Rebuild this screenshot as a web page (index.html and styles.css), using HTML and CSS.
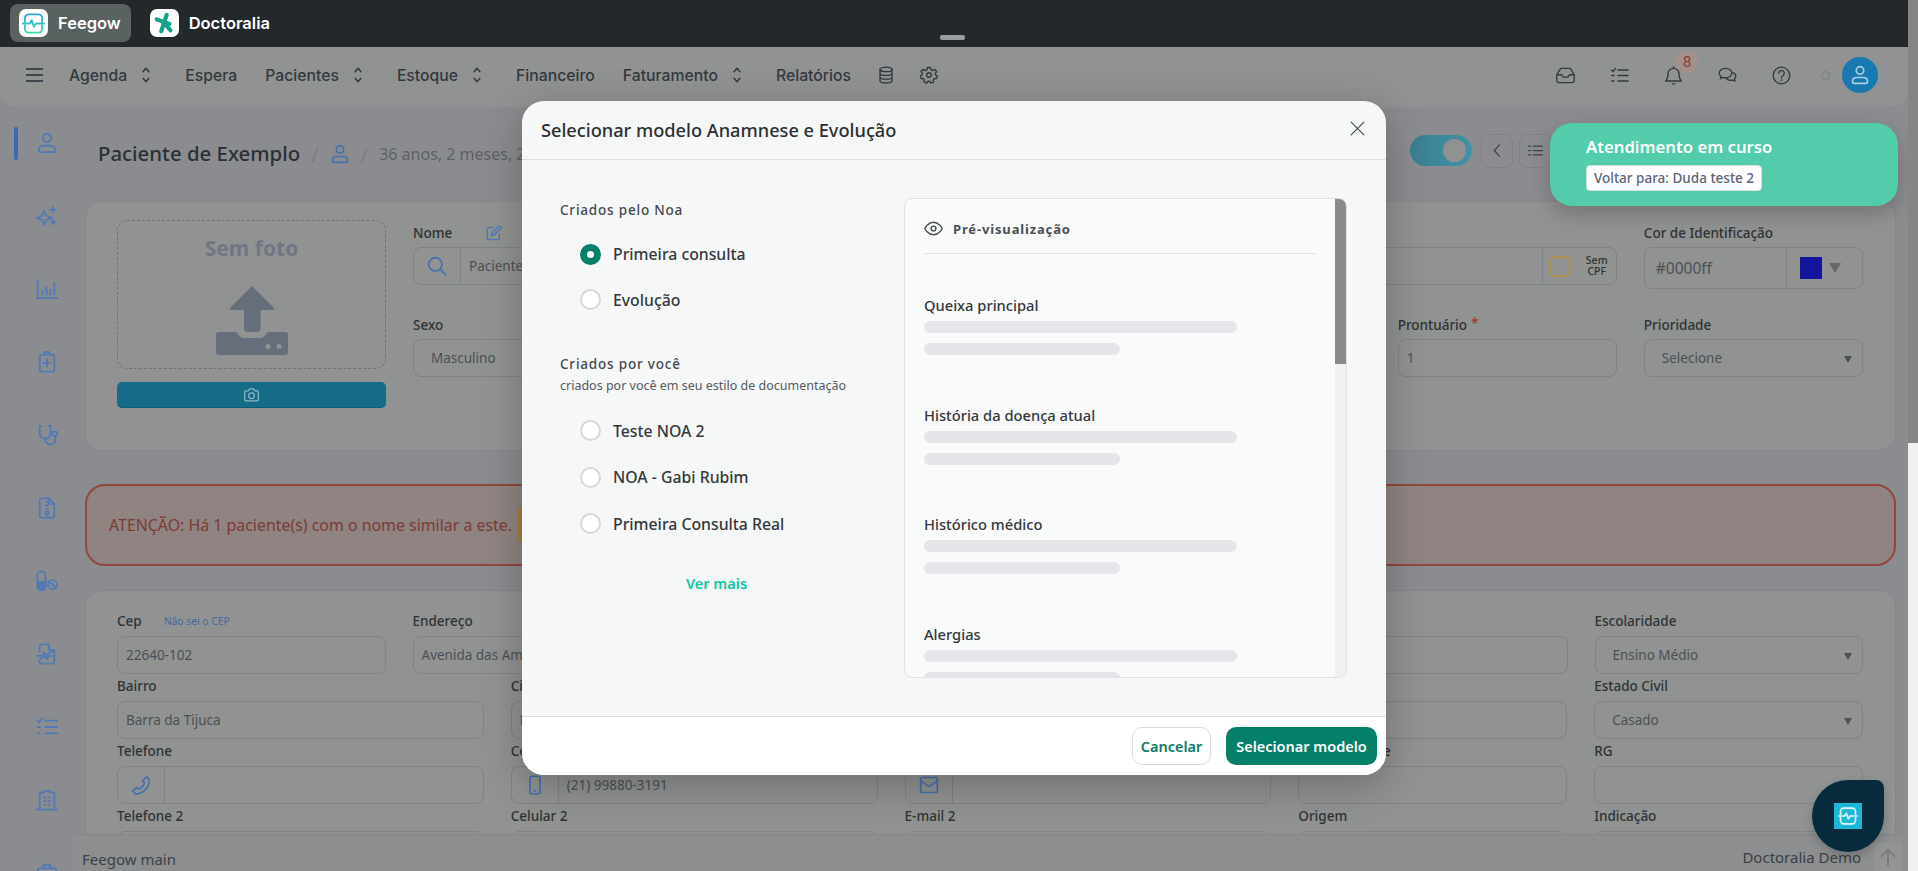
FILE: index.html
```html
<!DOCTYPE html>
<html lang="pt-BR">
<head>
  <meta charset="UTF-8" />
  <title>Feegow</title>
  <link rel="stylesheet" href="styles.css">
</head>
<body>
  <!-- Shared icons -->
  <svg class="icon-defs" aria-hidden="true">
    <defs>
      <linearGradient id="feegow-grad" x1="0" y1="0" x2="0" y2="1">
        <stop offset="0" stop-color="#2fa8e0"/>
        <stop offset="1" stop-color="#3fdca8"/>
      </linearGradient>
    </defs>
    <symbol id="i-updown" viewBox="0 0 12 24"><path d="M2.500 8L6 4l3.500 4M2.500 16L6 20l3.500-4"/></symbol>
    <symbol id="i-user" viewBox="0 0 24 24"><circle cx="12" cy="6.500" r="4.500"/><path d="M3 20c0-3 2.200-5 5-5h8c2.800 0 5 2 5 5 0 1.300-.8 2-2 2H5c-1.200 0-2-.7-2-2z"/></symbol>
    <symbol id="i-sparkle" viewBox="0 0 24 24"><path d="M9 6l2.300 5.700L17 14l-5.700 2.300L9 22l-2.300-5.700L1 14l5.700-2.300z"/><path class="fill" d="M18.500 0l1.300 3.700 3.700 1.300-3.700 1.300L18.500 10l-1.300-3.700L13.500 5l3.700-1.300zM18.500 14l1.300 3.200 3.200 1.300-3.200 1.300-1.300 3.200-1.300-3.200-3.200-1.300 3.200-1.300z"/></symbol>
    <symbol id="i-chart" viewBox="0 0 24 24"><path d="M2 2v20h21M7 14v4M11.500 10v8M15.500 13v5M20 6v12"/></symbol>
    <symbol id="i-clipboard" viewBox="0 0 24 24"><rect x="4" y="4" width="16" height="18.500" rx="2"/><path d="M9 4V3a2 2 0 0 1 2-2h2a2 2 0 0 1 2 2v1M12 9v8M8 13h8"/></symbol>
    <symbol id="i-stetho" viewBox="0 0 24 24"><path d="M6 2H4v8a6 6 0 0 0 12 0V2h-2M10 16v1a6 6 0 0 0 11 2.500V14"/><circle cx="20.500" cy="10.500" r="2.500"/></symbol>
    <symbol id="i-zipfile" viewBox="0 0 24 24"><path d="M14 1.500H6a2 2 0 0 0-2 2v17a2 2 0 0 0 2 2h12a2 2 0 0 0 2-2V7.500zM14 1.500v6h6M11 5h2M11 9h2M11 13h2"/><circle cx="12" cy="17.500" r="1.800"/></symbol>
    <symbol id="i-pills" viewBox="0 0 24 24"><rect x="1.500" y="1.500" width="9" height="21" rx="4.500"/><path class="fill" d="M1.500 12h9v6a4.500 4.500 0 0 1-9 0z"/><circle cx="18" cy="16" r="5"/><path d="M14.500 12.500l7 7"/></symbol>
    <symbol id="i-filepulse" viewBox="0 0 24 24"><path d="M14 1.500H6a2 2 0 0 0-2 2v6M4 18v2.500a2 2 0 0 0 2 2h12a2 2 0 0 0 2-2V7.500zM14 1.500v6h6M1 14h6l2-3.500 3 7 2-3.500h4"/></symbol>
    <symbol id="i-listcheck" viewBox="0 0 24 24"><path d="M10 5h13M10 12h13M10 19h13M1.500 5l2 2L7 2.500M2 12h2M2 19h2"/></symbol>
    <symbol id="i-building" viewBox="0 0 24 24"><path d="M4 22.500V5a1 1 0 0 1 1-1h4V2h6v2h4a1 1 0 0 1 1 1v17.500zM1 22.500h22M9 9h1.500M13.500 9H15M9 13h1.500M13.500 13H15M9 17h1.500M13.500 17H15"/></symbol>
    <symbol id="i-briefcase" viewBox="0 0 24 24"><rect x="2" y="7" width="20" height="15" rx="2"/><path d="M8 7V4a1 1 0 0 1 1-1h6a1 1 0 0 1 1 1v3"/></symbol>
    <symbol id="i-db" viewBox="0 0 24 24"><ellipse cx="12" cy="4.500" rx="8" ry="3"/><path d="M4 4.500v15c0 1.700 3.600 3 8 3s8-1.300 8-3v-15M4 9.500c0 1.700 3.600 3 8 3s8-1.300 8-3M4 14.500c0 1.700 3.600 3 8 3s8-1.300 8-3"/></symbol>
    <symbol id="i-gear" viewBox="0 0 24 24"><circle cx="12" cy="12" r="3"/><path d="M10 2h4l.6 3 2.500 1.100 2.600-1.600 2.500 2.900-1.900 2.400.5 2.200 2.200 1-1 3.800-2.700-.1-1.600 1.900.4 2.900-3.600 1.300-1.500-2.500h-2.500l-1.500 2.500-3.600-1.300.4-2.900-1.600-1.900-2.700.1-1-3.800 2.200-1 .5-2.200-1.900-2.400 2.500-2.900 2.600 1.600L9.400 5z"/></symbol>
    <symbol id="i-inbox" viewBox="0 0 24 24"><path d="M6 3h12l5 8v7a3 3 0 0 1-3 3H4a3 3 0 0 1-3-3v-7zM1 11h6l2 3h6l2-3h6"/></symbol>
    <symbol id="i-tasks" viewBox="0 0 24 24"><path d="M10 5h13M10 12h13M10 19h13M2 5l2 2 3-4M2 12h3M2 19h3"/></symbol>
    <symbol id="i-bell" viewBox="0 0 24 24"><path d="M12 3a7 7 0 0 0-7 7c0 5-1 7-3 9h20c-2-2-3-4-3-9a7 7 0 0 0-7-7zM12 1v2M10.500 22.500h3"/></symbol>
    <symbol id="i-chat" viewBox="0 0 24 24"><path d="M9.500 3C5 3 1.500 5.700 1.500 9c0 1.600.8 3 2.200 4.100L3 16l3.500-1.500c1 .3 2 .5 3 .5 4.500 0 8-2.700 8-6s-3.500-6-8-6z"/><path d="M19 8.500c2.200 1 3.500 2.700 3.500 4.500 0 1.300-.6 2.400-1.700 3.300l.7 2.700-3.200-1.300c-3.300.8-6.600-.3-8-2.500"/></symbol>
    <symbol id="i-help" viewBox="0 0 24 24"><circle cx="12" cy="12" r="10.500"/><path d="M8.500 9a3.500 3.500 0 1 1 5.500 3c-1.300.9-2 1.500-2 3M12 17.500v1"/></symbol>
    <symbol id="i-back" viewBox="0 0 24 24"><path d="M15 3l-8 9 8 9"/></symbol>
    <symbol id="i-list" viewBox="0 0 24 24"><path d="M8 5h15M8 12h15M8 19h15M1 5h3M1 12h3M1 19h3"/></symbol>
    <symbol id="i-search" viewBox="0 0 24 24"><circle cx="10" cy="10" r="8"/><path d="M16 16l6.500 6.500"/></symbol>
    <symbol id="i-edit" viewBox="0 0 24 24"><path d="M11 4H4a2 2 0 0 0-2 2v14a2 2 0 0 0 2 2h14a2 2 0 0 0 2-2v-7"/><path d="M18.500 2.500a2.100 2.100 0 0 1 3 3L12 15l-4 1 1-4z"/></symbol>
    <symbol id="i-camera" viewBox="0 0 24 24"><path d="M3 6h4l2-3h6l2 3h4a2 2 0 0 1 2 2v12a2 2 0 0 1-2 2H3a2 2 0 0 1-2-2V8a2 2 0 0 1 2-2z"/><circle cx="12" cy="14" r="4.500"/></symbol>
    <symbol id="i-phone" viewBox="0 0 24 24"><path d="M19 2l3 4c0 9-7 16-16 17l-4-4 5-4 2 2c3-1 6-4 7-7l-2-3z"/></symbol>
    <symbol id="i-mobile" viewBox="0 0 24 24"><rect x="6" y="1.500" width="12" height="21" rx="2"/><path d="M11 19h2"/></symbol>
    <symbol id="i-mail" viewBox="0 0 24 24"><rect x="2" y="3" width="20" height="18" rx="2"/><path d="M2 7l10 7 10-7"/></symbol>
    <symbol id="i-eye" viewBox="0 0 24 24"><path d="M1 12s4-8 11-8 11 8 11 8-4 8-11 8-11-8-11-8z"/><circle cx="12" cy="12" r="3"/></symbol>
    <symbol id="i-close" viewBox="0 0 24 24"><path d="M3 3l18 18M21 3L3 21"/></symbol>
    <symbol id="i-arrowup" viewBox="0 0 24 24"><path d="M12 22V3M4 11l8-8 8 8"/></symbol>
    <symbol id="i-pulse" viewBox="0 0 24 24"><path d="M3 10V6.500a4 4 0 0 1 4-4h10a4 4 0 0 1 4 4V10M3 14v3.500a4 4 0 0 0 4 4h10a4 4 0 0 0 4-4V14M1 12h7l2-3.500 2.500 7 2-3.500h8.500"/></symbol>
  </svg>

  <div class="app">
    <header class="topbar">
      <a class="brand brand-active">
        <span class="brand-logo">
          <svg class="logo-feegow" viewBox="0 0 24 24"><path d="M3 10V6.500a4 4 0 0 1 4-4h10a4 4 0 0 1 4 4V10M3 14v3.500a4 4 0 0 0 4 4h10a4 4 0 0 0 4-4V14M1 12h7l2-3.500 2.500 7 2-3.500h8.500"/></svg>
        </span>
        Feegow
      </a>
      <a class="brand">
        <span class="brand-logo">
          <svg class="logo-doctoralia" viewBox="0 0 24 24"><path d="M15 3L9 21M4 8l14 5"/><path d="M15 15l4 5"/></svg>
        </span>
        Doctoralia
      </a>
      <span class="topbar-handle"></span>
    </header>

    <nav class="navbar">
      <button class="menu-toggle"><span></span><span></span><span></span></button>
      <a class="nav-item">Agenda <svg class="ico updown"><use href="#i-updown"/></svg></a>
      <a class="nav-item">Espera</a>
      <a class="nav-item">Pacientes <svg class="ico updown"><use href="#i-updown"/></svg></a>
      <a class="nav-item">Estoque <svg class="ico updown"><use href="#i-updown"/></svg></a>
      <a class="nav-item">Financeiro</a>
      <a class="nav-item">Faturamento <svg class="ico updown"><use href="#i-updown"/></svg></a>
      <a class="nav-item nav-last">Relatórios</a>
      <svg class="ico nav-icon"><use href="#i-db"/></svg>
      <svg class="ico nav-icon"><use href="#i-gear"/></svg>

      <div class="nav-right">
        <svg class="ico nav-icon"><use href="#i-inbox"/></svg>
        <svg class="ico nav-icon"><use href="#i-tasks"/></svg>
        <span class="bell">
          <svg class="ico nav-icon"><use href="#i-bell"/></svg>
          <span class="bell-badge">8</span>
        </span>
        <svg class="ico nav-icon"><use href="#i-chat"/></svg>
        <svg class="ico nav-icon"><use href="#i-help"/></svg>
        <span class="status-dot"></span>
        <span class="avatar"><svg class="ico"><use href="#i-user"/></svg></span>
      </div>
    </nav>

    <div class="main">
      <aside class="sidebar">
        <a class="side-item active"><svg class="ico"><use href="#i-user"/></svg></a>
        <a class="side-item"><svg class="ico"><use href="#i-sparkle"/></svg></a>
        <a class="side-item"><svg class="ico"><use href="#i-chart"/></svg></a>
        <a class="side-item"><svg class="ico"><use href="#i-clipboard"/></svg></a>
        <a class="side-item"><svg class="ico"><use href="#i-stetho"/></svg></a>
        <a class="side-item"><svg class="ico"><use href="#i-zipfile"/></svg></a>
        <a class="side-item"><svg class="ico"><use href="#i-pills"/></svg></a>
        <a class="side-item"><svg class="ico"><use href="#i-filepulse"/></svg></a>
        <a class="side-item"><svg class="ico"><use href="#i-listcheck"/></svg></a>
        <a class="side-item"><svg class="ico"><use href="#i-building"/></svg></a>
        <a class="side-item"><svg class="ico"><use href="#i-briefcase"/></svg></a>
      </aside>

      <section class="content">
        <div class="page-head">
          <h1>Paciente de Exemplo</h1>
          <span class="crumb-sep">/</span>
          <svg class="ico crumb-icon"><use href="#i-user"/></svg>
          <span class="crumb-sep">/</span>
          <span class="crumb-text">36 anos, 2 meses, 2 dias</span>
          <div class="head-actions">
            <span class="toggle"><span class="toggle-knob"></span></span>
            <button class="square-btn"><svg class="ico"><use href="#i-back"/></svg></button>
            <button class="square-btn"><svg class="ico"><use href="#i-list"/></svg></button>
          </div>
        </div>

        <!-- Patient identification -->
        <div class="card card-patient">
          <div class="photo-col">
            <div class="photo-box">
              <strong>Sem foto</strong>
              <svg class="upload-icon" viewBox="0 0 72 69">
                <path d="M36 0L58 22q1 2-2 2H44.600V42q0 4-4 4H32q-4 0-4-4V24H16q-3 0-2-2z"/>
                <path d="M3 46H19q2 0 3 2 2 4 6 4H44q4 0 6-4 1-2 3-2H69q3 0 3 3V66q0 3-3 3H3q-3 0-3-3V49q0-3 3-3z"/>
                <circle class="dot" cx="52" cy="60.500" r="2.500"/><circle class="dot" cx="63" cy="60.500" r="2.500"/>
              </svg>
            </div>
            <button class="photo-btn"><svg class="ico"><use href="#i-camera"/></svg></button>
          </div>
          <div class="patient-fields">
            <div class="field span-2">
              <label>Nome <svg class="ico label-icon"><use href="#i-edit"/></svg></label>
              <div class="input-group">
                <span class="addon"><svg class="ico"><use href="#i-search"/></svg></span>
                <input type="text" value="Paciente de Exemplo">
              </div>
            </div>
            <div class="field span-3">
              <label>CPF</label>
              <div class="input-group">
                <input type="text" value="">
                <span class="cpf-check"><span class="checkbox"></span><small>Sem<br>CPF</small></span>
              </div>
            </div>
            <div class="field">
              <label>Cor de Identificação</label>
              <div class="input-group color-group">
                <input type="text" value="#0000ff">
                <span class="color-pick"><span class="swatch"></span><span class="swatch-arrow"></span></span>
              </div>
            </div>
            <div class="field">
              <label>Sexo</label>
              <div class="select">Masculino</div>
            </div>
            <div class="field col-5">
              <label>Prontuário <em>*</em></label>
              <input class="input-tight" type="text" value="1">
            </div>
            <div class="field">
              <label>Prioridade</label>
              <div class="select">Selecione</div>
            </div>
          </div>
        </div>

        <div class="alert">
          ATENÇÃO: Há 1 paciente(s) com o nome similar a este.
          <button class="alert-btn"></button>
        </div>

        <!-- Contact details -->
        <div class="card card-contact">
          <div class="grid-six">
            <div class="field">
              <label>Cep <a class="label-link">Não sei o CEP</a></label>
              <input type="text" value="22640-102">
            </div>
            <div class="field span-4">
              <label>Endereço</label>
              <input type="text" value="Avenida das Américas">
            </div>
            <div class="field">
              <label>Escolaridade</label>
              <div class="select">Ensino Médio</div>
            </div>
          </div>
          <div class="grid-five">
            <div class="field"><label>Bairro</label><input type="text" value="Barra da Tijuca"></div>
            <div class="field"><label>Cidade</label><input type="text" value="Rio de Janeiro"></div>
            <div class="field"><label>Estado</label><input type="text" value=""></div>
            <div class="field"><label>País</label><input type="text" value=""></div>
            <div class="field"><label>Estado Civil</label><div class="select">Casado</div></div>

            <div class="field">
              <label>Telefone</label>
              <div class="input-group">
                <span class="addon"><svg class="ico"><use href="#i-phone"/></svg></span>
                <input type="text" value="">
              </div>
            </div>
            <div class="field">
              <label>Celular</label>
              <div class="input-group">
                <span class="addon"><svg class="ico"><use href="#i-mobile"/></svg></span>
                <input type="text" value="(21) 99880-3191">
              </div>
            </div>
            <div class="field">
              <label>E-mail</label>
              <div class="input-group">
                <span class="addon"><svg class="ico"><use href="#i-mail"/></svg></span>
                <input type="text" value="">
              </div>
            </div>
            <div class="field"><label>Nacionalidade</label><input type="text" value=""></div>
            <div class="field"><label>RG</label><input type="text" value=""></div>

            <div class="field"><label>Telefone 2</label><input type="text" value=""></div>
            <div class="field"><label>Celular 2</label><input type="text" value=""></div>
            <div class="field"><label>E-mail 2</label><input type="text" value=""></div>
            <div class="field"><label>Origem</label><input type="text" value=""></div>
            <div class="field"><label>Indicação</label><input type="text" value=""></div>
          </div>
        </div>
      </section>
    </div>

    <footer class="page-footer">
      <span>Feegow main</span>
      <span class="footer-right">Doctoralia Demo</span>
      <button class="scroll-top"><svg class="ico"><use href="#i-arrowup"/></svg></button>
    </footer>

    <!-- Floating items -->
    <div class="toast">
      <strong>Atendimento em curso</strong>
      <button>Voltar para: Duda teste 2</button>
    </div>

    <button class="fab">
      <span class="fab-logo"><svg class="ico"><use href="#i-pulse"/></svg></span>
    </button>

    <!-- Template modal -->
    <div class="modal">
      <div class="modal-header">
        <h2>Selecionar modelo Anamnese e Evolução</h2>
        <button class="modal-close"><svg class="ico"><use href="#i-close"/></svg></button>
      </div>
      <div class="modal-body">
        <div class="model-list">
          <h3>Criados pelo Noa</h3>
          <label class="option option-checked"><span class="radio"></span>Primeira consulta</label>
          <label class="option"><span class="radio"></span>Evolução</label>

          <h3 class="group-mine">Criados por você</h3>
          <p>criados por você em seu estilo de documentação</p>
          <label class="option"><span class="radio"></span>Teste NOA 2</label>
          <label class="option"><span class="radio"></span>NOA - Gabi Rubim</label>
          <label class="option"><span class="radio"></span>Primeira Consulta Real</label>

          <a class="see-more">Ver mais</a>
        </div>

        <div class="preview">
          <div class="preview-scroll">
            <div class="preview-head">
              <svg class="ico"><use href="#i-eye"/></svg>
              Pré-visualização
            </div>
            <div class="preview-section">
              <h4>Queixa principal</h4>
              <div class="bar"></div><div class="bar bar-short"></div>
            </div>
            <div class="preview-section">
              <h4>História da doença atual</h4>
              <div class="bar"></div><div class="bar bar-short"></div>
            </div>
            <div class="preview-section">
              <h4>Histórico médico</h4>
              <div class="bar"></div><div class="bar bar-short"></div>
            </div>
            <div class="preview-section">
              <h4>Alergias</h4>
              <div class="bar"></div><div class="bar bar-short"></div>
            </div>
          </div>
          <div class="preview-scrollbar"><span></span></div>
        </div>
      </div>
      <div class="modal-footer">
        <button class="btn-cancel">Cancelar</button>
        <button class="btn-primary">Selecionar modelo</button>
      </div>
    </div>
  </div>

  <div class="page-scrollbar"><span></span></div>
</body>
</html>
```

FILE: styles.css
```css
/* Reset */
* {
  margin: 0;
  padding: 0;
  box-sizing: border-box;
}

body {
  display: flex;
  height: 871px;
  overflow: hidden;
  background-color: #8b8c8f;
  color: #303437;
  font-family: 'Noto Sans', 'Open Sans', sans-serif;
  font-size: 14px;
}

button {
  border: none;
  background: none;
  font-family: inherit;
  cursor: pointer;
}

.icon-defs {
  position: absolute;
  width: 0;
  height: 0;
}

/* Icons take their colour from the stroke */
.ico {
  display: block;
  width: 20px;
  height: 20px;
  fill: none;
  stroke: currentColor;
  stroke-width: 2;
  stroke-linecap: round;
  stroke-linejoin: round;
  flex: none;
}

symbol .fill,
.ico .fill {
  fill: currentColor;
  stroke: none;
}

.app {
  position: relative;
  flex: 1;
  display: flex;
  flex-direction: column;
  min-width: 0;
  overflow: hidden;
}

/* Window scrollbar on the right edge */
.page-scrollbar {
  flex: none;
  width: 10px;
  background-color: #f1f1f1;
}

.page-scrollbar span {
  display: block;
  height: 443px;
  background-color: #858585;
}

/* Top dark bar */
.topbar {
  position: relative;
  flex: none;
  display: flex;
  align-items: flex-start;
  gap: 10px;
  height: 47px;
  padding: 4px 10px 0;
  background-color: #23282a;
}

.brand {
  display: flex;
  align-items: center;
  gap: 10px;
  height: 38px;
  padding: 0 10px 0 9px;
  border-radius: 8px;
  color: #fff;
  font-family: Inter, sans-serif;
  font-size: 16.500px;
  font-weight: 600;
}

.brand-active {
  background-color: #596161;
}

.brand-logo {
  display: flex;
  align-items: center;
  justify-content: center;
  width: 29px;
  height: 28px;
  border-radius: 7px;
  background-color: #fff;
}

.logo-feegow {
  width: 23px;
  height: 23px;
  fill: none;
  stroke: url(#feegow-grad);
  stroke-width: 2;
  stroke-linecap: round;
  stroke-linejoin: round;
}

.logo-doctoralia {
  width: 22px;
  height: 22px;
  fill: none;
  stroke: #10a58a;
  stroke-width: 4.500;
  stroke-linecap: round;
}

.topbar-handle {
  position: absolute;
  left: 940px;
  top: 35px;
  width: 25px;
  height: 5px;
  border-radius: 2px;
  background-color: #9a9d9d;
}

/* Main navigation */
.navbar {
  flex: none;
  display: flex;
  align-items: center;
  height: 60px;
  padding: 0 30px 4px 26px;
  border-radius: 0 0 16px 16px;
  background-color: #909392;
  color: #33393f;
  font-family: Inter, sans-serif;
  font-size: 15.750px;
  font-weight: 500;
}

.menu-toggle {
  display: flex;
  flex-direction: column;
  justify-content: space-between;
  width: 17px;
  height: 14px;
  margin-right: 26px;
}

.menu-toggle span {
  height: 2px;
  background-color: #3e464f;
}

.nav-item {
  display: flex;
  align-items: center;
  margin-right: 28px;
  white-space: nowrap;
}

.nav-last {
  margin-right: 26px;
}

.updown {
  width: 12px;
  height: 20px;
  margin: 0 5px 0 13px;
  stroke-width: 1.800;
}

.nav-icon {
  margin-right: 25px;
  width: 18px;
  height: 18px;
  stroke-width: 1.800;
}

.nav-right {
  display: flex;
  align-items: center;
  margin-left: auto;
}

.nav-right .nav-icon {
  width: 19px;
  height: 19px;
  margin-right: 35px;
  stroke-width: 1.700;
}

.bell {
  position: relative;
}

.bell-badge {
  position: absolute;
  top: -15px;
  left: 12px;
  width: 22px;
  height: 22px;
  border-radius: 50%;
  background-color: #a58f8b;
  color: #8a3a32;
  font-size: 14px;
  font-weight: 400;
  line-height: 22px;
  text-align: center;
}

.status-dot {
  width: 9px;
  height: 9px;
  margin: 0 12px 0 -5px;
  border: 1px solid #7d8083;
  border-radius: 50%;
}

.avatar {
  display: flex;
  align-items: center;
  justify-content: center;
  width: 36px;
  height: 36px;
  border-radius: 50%;
  background-color: #1878b0;
  color: #a9cfe3;
}

/* Body row: sidebar + content */
.main {
  flex: 1;
  display: flex;
  min-height: 0;
}

.sidebar {
  flex: none;
  width: 85px;
  padding-top: 25px;
  color: #5079b5;
}

.side-item {
  position: relative;
  display: flex;
  justify-content: center;
  width: 94px;
  height: 73px;
}

.side-item .ico {
  width: 22px;
  height: 22px;
}

.side-item.active::before {
  content: "";
  position: absolute;
  left: 14px;
  top: -5px;
  width: 4px;
  height: 33px;
  border-radius: 2px;
  background-color: #3c6bab;
}

.content {
  flex: 1;
  min-width: 0;
  padding-right: 12px;
}

.page-head {
  display: flex;
  align-items: center;
  height: 94px;
  padding-left: 13px;
  padding-right: 345px;
}

.page-head h1 {
  margin-top: -2px;
  font-size: 20.400px;
  font-weight: 500;
  color: #2c3034;
}

.crumb-sep {
  margin: 0 11px;
  color: #7a7d82;
  font-size: 20px;
}

.crumb-icon {
  width: 20px;
  height: 20px;
  color: #4570ad;
}

.crumb-text {
  font-size: 16px;
  color: #5d6166;
  white-space: nowrap;
}

.head-actions {
  display: flex;
  align-items: center;
  gap: 6px;
  margin-left: auto;
  margin-top: -7px;
}

.toggle {
  display: flex;
  align-items: center;
  justify-content: flex-end;
  width: 62px;
  height: 31px;
  margin-right: 3px;
  padding-right: 6px;
  border-radius: 16px;
  background: linear-gradient(to right, #38808f, #4391a8);
}

.toggle-knob {
  width: 23px;
  height: 23px;
  border-radius: 50%;
  background-color: #8f9291;
}

.square-btn {
  display: flex;
  align-items: center;
  justify-content: center;
  width: 32px;
  height: 34px;
  border: 1px solid #7f8289;
  border-radius: 8px;
  color: #3f4449;
}

.square-btn .ico {
  width: 15px;
  height: 15px;
}

/* Cards */
.card {
  border: 1px solid #85878a;
  border-radius: 16px;
  background-color: #909391;
}

.card-patient {
  display: flex;
  gap: 27px;
  height: 250px;
  padding: 18px 32px 0 31px;
}

.card-patient .field label {
  padding-bottom: 2px;
}

.photo-col {
  flex: none;
  width: 269px;
}

.photo-box {
  display: flex;
  flex-direction: column;
  align-items: center;
  height: 149px;
  padding-top: 11px;
  border: 1px dashed #6f7276;
  border-radius: 10px;
}

.photo-box strong {
  color: #6f7785;
  font-size: 21px;
  font-weight: 700;
  line-height: 32px;
}

.upload-icon {
  width: 72px;
  height: 69px;
  margin-top: 22px;
  fill: #666e7c;
}

.upload-icon .dot {
  fill: #909391;
}

.photo-btn {
  display: flex;
  align-items: center;
  justify-content: center;
  width: 100%;
  height: 26px;
  margin-top: 13px;
  border-bottom: 1px solid #0f5c75;
  border-radius: 5px;
  background-color: #146c89;
  color: #8fb6c4;
}

.photo-btn .ico {
  width: 15px;
  height: 15px;
}

.patient-fields {
  flex: 1;
  display: grid;
  grid-template-columns: repeat(6, 1fr);
  grid-template-rows: 66px auto;
  align-content: start;
  gap: 26px 27px;
  padding-top: 4px;
}

.span-2 {
  grid-column: span 2;
}

.span-3 {
  grid-column: span 3;
}

.span-4 {
  grid-column: span 4;
}

.col-5 {
  grid-column: 5;
}

.field {
  min-width: 0;
}

.field label {
  display: flex;
  align-items: center;
  width: fit-content;
  height: 20px;
  margin-bottom: 3px;
  padding-bottom: 4px;
  color: #2e3235;
  font-size: 13.500px;
  font-weight: 500;
  white-space: nowrap;
}

.field label em {
  margin: 0 0 4px 4px;
  color: #9c3a32;
  font-style: normal;
}

.label-icon {
  width: 16px;
  height: 16px;
  margin-left: 34px;
  color: #4b78bd;
}

.label-link {
  margin-left: 22px;
  color: #44699e;
  font-size: 10.300px;
  font-weight: 400;
}

.field input,
.select {
  display: block;
  width: 100%;
  height: 38px;
  padding: 0 8px;
  border: 1px solid #7f8289;
  border-radius: 8px;
  background: transparent;
  color: #4c5055;
  font-family: inherit;
  font-size: 13.500px;
  outline: none;
}

.select {
  position: relative;
  padding-left: 17px;
  line-height: 36px;
}

.select::after {
  content: "";
  position: absolute;
  right: 10px;
  top: 16px;
  border: 4px solid transparent;
  border-top: 7px solid #4c5055;
  border-bottom: 0;
}

.input-group {
  display: flex;
  height: 38px;
  border: 1px solid #7f8289;
  border-radius: 8px;
}

.input-group input {
  flex: 1;
  min-width: 0;
  height: 100%;
  border: none;
  border-radius: 0;
}

.addon {
  flex: none;
  display: flex;
  align-items: center;
  justify-content: center;
  width: 47px;
  border-right: 1px solid #7f8289;
  color: #456fae;
}

.cpf-check {
  flex: none;
  display: flex;
  align-items: center;
  gap: 15px;
  width: 74px;
  padding-left: 7px;
  border-left: 1px solid #7f8289;
}

.checkbox {
  width: 21px;
  height: 21px;
  border: 2.500px solid #ae9050;
  border-radius: 5px;
}

.cpf-check small {
  font-size: 10.500px;
  font-weight: 500;
  line-height: 11px;
  text-align: center;
  color: #2e3235;
}

.color-group {
  height: 42px;
}

.color-group input {
  font-size: 15.500px;
  padding-left: 11px;
}

.color-pick {
  flex: none;
  display: flex;
  align-items: center;
  gap: 7px;
  width: 76px;
  padding-left: 13px;
  border-left: 1px solid #7f8289;
}

.swatch {
  width: 22px;
  height: 22px;
  background-color: #14149a;
}

.swatch-arrow {
  border: 6px solid transparent;
  border-top: 10px solid #646668;
  border-bottom: 0;
}

/* Similar name warning */
.alert {
  display: flex;
  align-items: center;
  gap: 5px;
  height: 82px;
  margin: 33px 0 24px;
  padding-left: 22px;
  border: 2px solid #93473c;
  border-radius: 20px;
  background-color: #8f8482;
  color: #7e3a33;
  font-size: 15.900px;
}

.alert-btn {
  width: 60px;
  height: 34px;
  border-radius: 4px;
  background-color: #9e8238;
}

/* Contact card */
.card-contact {
  padding: 22px 32px 0 31px;
}

.grid-six {
  display: grid;
  grid-template-columns: repeat(6, 1fr);
  column-gap: 27px;
  margin-bottom: 4px;
}

.grid-six .span-4 {
  grid-column: 2 / span 4;
}

.grid-five {
  display: grid;
  grid-template-columns: repeat(3, 367fr) repeat(2, 269fr);
  gap: 4px 27px;
}

/* Footer strip, it sits over the scrolled page */
.page-footer {
  position: absolute;
  left: 72px;
  right: 0;
  bottom: 0;
  display: flex;
  align-items: center;
  height: 37px;
  padding: 12px 6px 0 10px;
  border-top: 1px solid #858789;
  background-color: #8c8e8f;
  color: #3b4046;
  font-size: 15px;
}

.footer-right {
  margin-left: auto;
  margin-right: 13px;
  transform: translateY(-2px);
}

.scroll-top {
  display: flex;
  align-items: center;
  justify-content: center;
  width: 28px;
  height: 29px;
  margin-top: -4px;
  background-color: #939594;
  color: #75777a;
}

/* "Atendimento em curso" toast */
.toast {
  position: absolute;
  left: 1550px;
  top: 123px;
  width: 348px;
  height: 83px;
  padding: 12px 36px;
  border-radius: 22px;
  background-color: #52ccaa;
  box-shadow: 0 8px 20px rgba(0, 0, 0, 0.2);
  color: #fff;
}

.toast strong {
  display: block;
  height: 30px;
  font-size: 16.700px;
  font-weight: 600;
  line-height: 24px;
}

.toast button {
  height: 26px;
  padding: 0 7px;
  border: 1px solid #d8dde0;
  border-radius: 4px;
  background-color: #fff;
  color: #5b6478;
  font-size: 13.500px;
  font-weight: 500;
}

/* Floating drop button */
.fab {
  position: absolute;
  left: 1812px;
  top: 780px;
  display: flex;
  align-items: center;
  justify-content: center;
  width: 72px;
  height: 72px;
  border-radius: 50% 8px 50% 50%;
  background-color: #052b3c;
  box-shadow: 0 4px 10px rgba(0, 0, 0, 0.2);
}

.fab-logo {
  display: flex;
  align-items: center;
  justify-content: center;
  width: 28px;
  height: 26px;
  background-color: #1db8d8;
  color: #dff5fa;
}

/* Modal */
.modal {
  position: absolute;
  left: 522px;
  top: 101px;
  display: flex;
  flex-direction: column;
  width: 864px;
  height: 674px;
  overflow: hidden;
  border-radius: 22px;
  background-color: #f6f8f8;
  box-shadow: 0 10px 40px rgba(0, 0, 0, 0.25);
}

.modal-header {
  flex: none;
  display: flex;
  align-items: center;
  justify-content: space-between;
  height: 59px;
  padding: 0 20px 0 19px;
  border-bottom: 1px solid #dcdfe0;
}

.modal-header h2 {
  color: #2b2f32;
  font-size: 18.200px;
  font-weight: 500;
}

.modal-close {
  margin-top: -3px;
  color: #3a3f44;
}

.modal-close .ico {
  width: 17px;
  height: 17px;
  stroke-width: 1.500;
}

.modal-body {
  flex: 1;
  display: flex;
  gap: 31px;
  padding: 38px 39px 0 38px;
}

.model-list {
  flex: none;
  width: 313px;
  padding-top: 2px;
}

.model-list h3 {
  height: 20px;
  margin-bottom: 13px;
  color: #45494d;
  font-size: 13.500px;
  font-weight: 500;
  letter-spacing: 0.8px;
  line-height: 20px;
}

.model-list .group-mine {
  margin: 33px 0 4px;
}

.model-list p {
  height: 16px;
  margin-bottom: 16px;
  color: #55595e;
  font-size: 12.500px;
  line-height: 16px;
}

.option {
  display: flex;
  align-items: center;
  gap: 12px;
  height: 42px;
  margin-bottom: 4.500px;
  padding-left: 20px;
  border-radius: 10px;
  color: #34383c;
  font-size: 15.800px;
  font-weight: 500;
}

.option-checked {
  margin-bottom: 3.500px;
  background-color: #f7f9f9;
}

.radio {
  flex: none;
  width: 21px;
  height: 21px;
  border: 2px solid #d5d8e0;
  border-radius: 50%;
  background-color: #fff;
}

.option-checked .radio {
  border: 7px solid #047f68;
}

.see-more {
  display: block;
  margin-top: 27px;
  color: #0cc6a0;
  font-size: 14.500px;
  font-weight: 600;
  line-height: 22px;
  text-align: center;
}

/* Preview panel */
.preview {
  flex: 1;
  display: flex;
  height: 480px;
  overflow: hidden;
  border: 1px solid #e0e2e3;
  border-radius: 8px;
  background-color: #f9fafa;
}

.preview-scroll {
  flex: 1;
  min-width: 0;
  padding: 20px 19px 0;
}

.preview-head {
  display: flex;
  align-items: center;
  gap: 10px;
  height: 35px;
  padding-bottom: 15px;
  border-bottom: 1px solid #e2e4e5;
  color: #4c5055;
  font-size: 13px;
  font-weight: 700;
  letter-spacing: 0.85px;
}

.preview-head .ico {
  width: 19px;
  height: 19px;
  stroke-width: 1.800;
}

.preview-section {
  height: 109.700px;
}

.preview-head + .preview-section {
  margin-top: 40px;
}

.preview-section h4 {
  height: 22px;
  margin-bottom: 5px;
  color: #34383c;
  font-size: 14.700px;
  font-weight: 500;
  line-height: 22px;
}

.bar {
  width: 313px;
  height: 12px;
  margin-bottom: 10px;
  border-radius: 6px;
  background-color: #e5e6ea;
}

.bar-short {
  width: 196px;
}

.preview-scrollbar {
  flex: none;
  width: 11px;
  background-color: #f1f1f1;
}

.preview-scrollbar span {
  display: block;
  height: 165px;
  background-color: #8a8a8a;
}

.modal-footer {
  flex: none;
  display: flex;
  align-items: center;
  justify-content: flex-end;
  gap: 15px;
  height: 59px;
  padding: 0 9px 1px 0;
  border-top: 1px solid #dcdfe0;
  background-color: #fff;
}

.modal-footer button {
  height: 38px;
  border-radius: 10px;
  font-size: 14.500px;
  font-weight: 600;
}

.btn-cancel {
  width: 79px;
  border: 1px solid #d9dcdc;
  color: #0e7a66;
}

.btn-primary {
  width: 151px;
  background-color: #047f68;
  color: #fff;
}
```
